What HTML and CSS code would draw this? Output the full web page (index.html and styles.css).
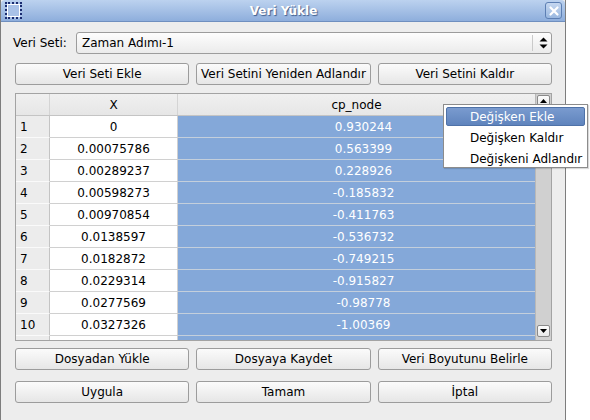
FILE: index.html
```html
<!DOCTYPE html>
<html>
<head>
<meta charset="utf-8">
<link rel="stylesheet" href="styles.css">
</head>
<body>
<div class="window">
  <div class="titlebar">
    <div class="app-icon"></div>
    <div class="title">Veri Yükle</div>
    <div class="close-btn"><svg width="12" height="12" viewBox="0 0 12 12"><path d="M2.5 2.5 L9.5 9.5 M9.5 2.5 L2.5 9.5" stroke="#ffffff" stroke-width="2.2" stroke-linecap="round"/></svg></div>
  </div>
  <div class="content">
    <div class="row-set">
      <span class="label">Veri Seti:</span>
      <div class="combo">
        <span class="combo-text">Zaman Adımı-1</span>
        <span class="combo-arrow"><svg width="9" height="12" viewBox="0 0 9 12"><path d="M4.5 0.5 L8.5 4.5 L0.5 4.5 Z M0.5 7.5 L8.5 7.5 L4.5 11.5 Z" fill="#000"/></svg></span>
      </div>
    </div>
    <div class="btn-row">
      <button class="btn">Veri Seti Ekle</button>
      <button class="btn">Veri Setini Yeniden Adlandır</button>
      <button class="btn">Veri Setini Kaldır</button>
    </div>
    <div class="table-frame">
      <div class="table-main">
        <div class="thead">
          <div class="corner"></div>
          <div class="th th-x">X</div>
          <div class="th th-cp">cp_node</div>
        </div>
        <div class="tbody">
          <div class="tr"><div class="rh">1</div><div class="td">0</div><div class="td sel">0.930244</div></div>
          <div class="tr"><div class="rh">2</div><div class="td">0.00075786</div><div class="td sel">0.563399</div></div>
          <div class="tr"><div class="rh">3</div><div class="td">0.00289237</div><div class="td sel">0.228926</div></div>
          <div class="tr"><div class="rh">4</div><div class="td">0.00598273</div><div class="td sel">-0.185832</div></div>
          <div class="tr"><div class="rh">5</div><div class="td">0.00970854</div><div class="td sel">-0.411763</div></div>
          <div class="tr"><div class="rh">6</div><div class="td">0.0138597</div><div class="td sel">-0.536732</div></div>
          <div class="tr"><div class="rh">7</div><div class="td">0.0182872</div><div class="td sel">-0.749215</div></div>
          <div class="tr"><div class="rh">8</div><div class="td">0.0229314</div><div class="td sel">-0.915827</div></div>
          <div class="tr"><div class="rh">9</div><div class="td">0.0277569</div><div class="td sel">-0.98778</div></div>
          <div class="tr"><div class="rh">10</div><div class="td">0.0327326</div><div class="td sel">-1.00369</div></div>
          <div class="tr"><div class="rh"></div><div class="td"></div><div class="td sel"></div></div>
        </div>
      </div>
      <div class="scrollbar">
        <div class="sb-btn"><svg width="7" height="4" viewBox="0 0 7 4"><path d="M3.5 0 L7 4 L0 4 Z" fill="#000"/></svg></div>
        <div class="sb-track"></div>
        <div class="sb-btn"><svg width="7" height="4" viewBox="0 0 7 4"><path d="M0 0 L7 0 L3.5 4 Z" fill="#000"/></svg></div>
      </div>
    </div>
    <div class="btn-row row-file">
      <button class="btn">Dosyadan Yükle</button>
      <button class="btn">Dosyaya Kaydet</button>
      <button class="btn">Veri Boyutunu Belirle</button>
    </div>
    <div class="btn-row row-action">
      <button class="btn">Uygula</button>
      <button class="btn">Tamam</button>
      <button class="btn">İptal</button>
    </div>
  </div>
</div>
<div class="menu">
  <div class="menu-item active">Değişken Ekle</div>
  <div class="menu-item">Değişken Kaldır</div>
  <div class="menu-item">Değişkeni Adlandır</div>
</div>
</body>
</html>
```

FILE: styles.css
```css
* { box-sizing: border-box; }
html, body { margin: 0; padding: 0; }
body {
  width: 590px;
  height: 420px;
  background: #ffffff;
  font-family: "DejaVu Sans", sans-serif;
  font-size: 12px;
  color: #000;
  position: relative;
  overflow: hidden;
}
.window {
  width: 566px;
  height: 420px;
  background: #ededed;
  border-left: 1px solid #7d7d7d;
  border-right: 1px solid #7d7d7d;
  display: flex;
  flex-direction: column;
}
.titlebar {
  height: 22px;
  flex-shrink: 0;
  background: linear-gradient(#bcd2ef, #8eaedc);
  border-bottom: 1px solid #6f8fbf;
  border-radius: 4px 4px 0 0;
  display: flex;
  align-items: center;
  padding: 0 3px 0 3px;
}
.app-icon {
  width: 17px;
  height: 17px;
  margin-left: 1px;
  border: 2px dotted #1a2c70;
  background: #a9c2e8;
  outline: 1px solid #ffffff;
  outline-offset: -3px;
}
.title {
  flex: 1;
  text-align: center;
  color: #ffffff;
  font-weight: bold;
  text-shadow: 1px 1px 1px #3f5e8e;
}
.close-btn {
  width: 17px;
  height: 17px;
  border: 1px solid #5d7fb3;
  border-radius: 3px;
  background: linear-gradient(#c5d7f0, #9ab8e0);
  display: flex;
  align-items: center;
  justify-content: center;
}
.content {
  flex: 1;
  padding: 10px 13px 0 12px;
  display: flex;
  flex-direction: column;
}
.row-set {
  display: flex;
  align-items: center;
  height: 22px;
}
.label { width: 63px; }
.combo {
  flex: 1;
  height: 22px;
  border: 1px solid #9c9c9c;
  border-radius: 3px;
  background: linear-gradient(#fdfdfd, #ebebeb);
  display: flex;
  align-items: center;
}
.combo-text { flex: 1; padding-left: 5px; }
.combo-arrow {
  width: 17px;
  height: 16px;
  border-left: 1px solid #cacaca;
  display: flex;
  align-items: center;
  justify-content: flex-end;
  padding-right: 1px;
  margin-right: 2px;
}
.btn-row {
  display: flex;
  gap: 7px;
  margin-top: 9px;
  padding-left: 2px;
}
.btn {
  flex: 1;
  height: 22px;
  font-family: inherit;
  font-size: 12px;
  color: #000;
  border: 1px solid #9c9c9c;
  border-radius: 3px;
  background: linear-gradient(#fbfbfb, #e6e6e6);
  padding: 0;
}
.table-frame {
  margin: 8px 0 0 2px;
  height: 248px;
  flex-shrink: 0;
  border: 1px solid #a3a3a3;
  display: flex;
  overflow: hidden;
  background: #ffffff;
}
.table-main { flex: 1; display: flex; flex-direction: column; overflow: hidden; }
.thead {
  display: flex;
  height: 22px;
  flex-shrink: 0;
  background: linear-gradient(#f0f0f0, #e6e6e6);
  border-bottom: 1px solid #c4c4c4;
}
.corner { width: 34px; border-right: 1px solid #d4d4d4; }
.th {
  display: flex;
  align-items: center;
  justify-content: center;
}
.th-x { width: 128px; border-right: 1px solid #d4d4d4; }
.th-cp { flex: 1; }
.tbody { display: flex; flex-direction: column; }
.tr { display: flex; height: 22px; flex-shrink: 0; }
.rh {
  width: 34px;
  background: #ececec;
  border-right: 1px solid #c4c4c4;
  border-bottom: 1px solid #fafafa;
  padding-left: 4px;
  display: flex;
  align-items: center;
}
.td {
  width: 128px;
  border-right: 1px solid #d0d0d0;
  border-bottom: 1px solid #d0d0d0;
  display: flex;
  align-items: center;
  justify-content: center;
  padding-top: 1px;
}
.td.sel {
  flex: 1;
  background: #84a8d9;
  color: #ffffff;
  border-right: none;
  border-bottom: 1px solid #c4cfdc;
  padding-left: 14px;
}
.scrollbar {
  width: 16px;
  background: #d0d0d0;
  border-left: 1px solid #b8b8b8;
  display: flex;
  flex-direction: column;
}
.sb-btn {
  height: 12px;
  background: linear-gradient(#fdfdfd, #e8e8e8);
  border: 1px solid #8a8a8a;
  border-radius: 2px;
  margin: 1px 1px 0 1px;
  display: flex;
  align-items: center;
  justify-content: center;
}
.sb-track { flex: 1; }
.sb-btn:last-child { margin: 0 1px 3px 1px; }
.row-file { margin-top: 7px; }
.row-action { margin-top: 11px; }
.menu {
  position: absolute;
  left: 443px;
  top: 104px;
  width: 145px;
  height: 64px;
  background: #ffffff;
  border: 1px solid #8c8c8c;
  padding: 2px 2px;
  box-shadow: 1px 1px 1px rgba(0,0,0,0.15);
}
.menu-item {
  height: 21px;
  line-height: 21px;
  padding-left: 24px;
}
.menu-item.active {
  height: 19px;
  line-height: 19px;
  margin-bottom: 2px;
  background: linear-gradient(#7a9bcf, #5f84bd);
  border: 1px solid #4f72a8;
  border-radius: 2px;
  color: #ffffff;
  padding-left: 23px;
}
```
